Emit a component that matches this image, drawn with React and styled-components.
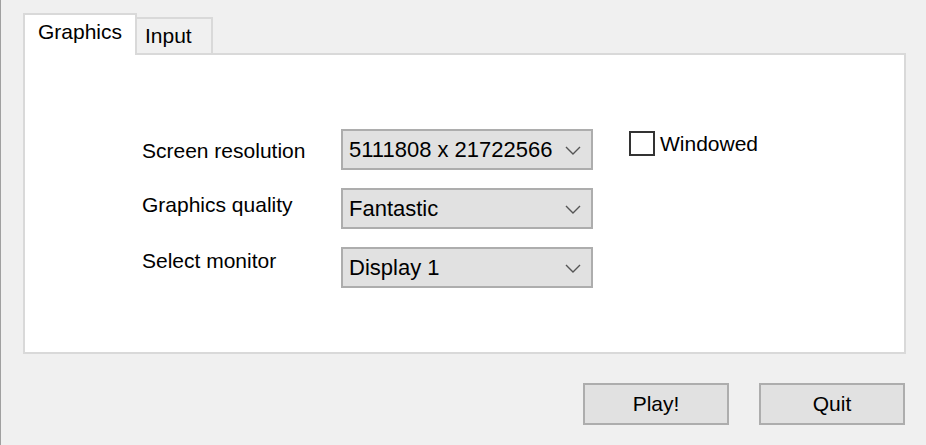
import React from "react";
import styled, { createGlobalStyle } from "styled-components";

const GlobalStyle = createGlobalStyle`
  html, body {
    margin: 0;
    padding: 0;
    background: #f0f0f0;
  }
  * {
    box-sizing: border-box;
  }
`;

const Window = styled.div`
  width: 926px;
  height: 445px;
  background: #f0f0f0;
  border-left: 1px solid #a0a0a0;
  padding: 13px 20px 0 22px;
  font-family: "Liberation Sans", Arial, sans-serif;
  font-size: 21px;
  color: #000;
  display: flex;
  flex-direction: column;
`;

const TabRow = styled.div`
  display: flex;
  align-items: flex-end;
  height: 40px;
`;

const Tab = styled.div`
  position: relative;
  z-index: ${(p) => (p.$active ? 1 : 0)};
  width: ${(p) => p.$w}px;
  height: ${(p) => (p.$active ? 42 : 36)}px;
  margin-bottom: ${(p) => (p.$active ? -2 : 0)}px;
  background: ${(p) => (p.$active ? "#ffffff" : "#f0f0f0")};
  border: 2px solid #d9d9d9;
  border-bottom: none;
  border-left-width: ${(p) => (p.$active ? 2 : 0)}px;
  padding: 5px 0 0 ${(p) => p.$pad}px;
  line-height: 24px;
`;

const Panel = styled.div`
  width: 883px;
  height: 301px;
  background: #ffffff;
  border: 2px solid #d9d9d9;
  padding: 74px 0 0 117px;
`;

const Form = styled.div`
  display: grid;
  grid-template-columns: 163px 252px auto;
  grid-auto-rows: 41px;
  row-gap: 18px;
  column-gap: 36px;
`;

const Label = styled.div`
  line-height: 24px;
  white-space: nowrap;
  padding-top: ${(p) => p.$top}px;
`;

const Combo = styled.div`
  display: flex;
  align-items: center;
  justify-content: space-between;
  height: 41px;
  background: #e1e1e1;
  border: 2px solid #adadad;
  padding: 1px 10px 0 6px;
  font-size: 22px;
  line-height: 24px;
  white-space: nowrap;
`;

const CheckRow = styled.label`
  display: flex;
  align-items: center;
  gap: 5px;
  align-self: start;
  margin-top: 2px;
  line-height: 24px;
  white-space: nowrap;
`;

const Box = styled.span`
  width: 26px;
  height: 25px;
  border: 2px solid #333333;
  background: #ffffff;
`;

const Footer = styled.div`
  display: flex;
  justify-content: flex-end;
  gap: 30px;
  margin-top: 29px;
  padding-right: 1px;
`;

const Button = styled.button`
  width: 146px;
  height: 42px;
  background: #e1e1e1;
  border: 2px solid #adadad;
  font-family: inherit;
  font-size: 21px;
  color: #000;
  padding: 0;
  line-height: 24px;
`;

function Chevron() {
  return (
    <svg width="16" height="9" viewBox="0 0 16 9">
      <path d="M1 1 L8 8 L15 1" fill="none" stroke="#555" strokeWidth="1.4" />
    </svg>
  );
}

function Select({ value }) {
  return (
    <Combo>
      <span>{value}</span>
      <Chevron />
    </Combo>
  );
}

export default function App() {
  return (
    <>
      <GlobalStyle />
      <Window>
        <TabRow>
          <Tab $active $w={114} $pad={13}>
            Graphics
          </Tab>
          <Tab $w={76} $pad={8}>
            Input
          </Tab>
        </TabRow>
        <Panel>
          <Form>
            <Label $top={10}>Screen resolution</Label>
            <Select value="5111808 x 21722566" />
            <CheckRow>
              <Box />
              Windowed
            </CheckRow>
            <Label $top={5}>Graphics quality</Label>
            <Select value="Fantastic" />
            <span />
            <Label $top={2}>Select monitor</Label>
            <Select value="Display 1" />
          </Form>
        </Panel>
        <Footer>
          <Button>Play!</Button>
          <Button>Quit</Button>
        </Footer>
      </Window>
    </>
  );
}
